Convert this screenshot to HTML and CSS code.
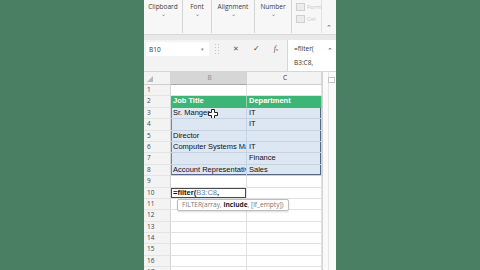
FILE: index.html
```html
<!DOCTYPE html>
<html lang="en">
<head>
  <meta charset="UTF-8">
  <title>Excel FILTER</title>
  <link rel="stylesheet" href="styles.css">
</head>
<body>

<div class="app">

  <div class="ribbon">
    <div class="group w-clip"><span class="glabel">Clipboard</span><span class="gcaret">&#8964;</span></div>
    <div class="group w-font"><span class="glabel">Font</span><span class="gcaret">&#8964;</span></div>
    <div class="group w-align"><span class="glabel">Alignment</span><span class="gcaret">&#8964;</span></div>
    <div class="group w-num"><span class="glabel">Number</span><span class="gcaret">&#8964;</span></div>
    <div class="group w-cells">
      <div class="ghost"><span class="gicon"></span>Form</div>
      <div class="ghost"><span class="gicon"></span>Cel</div>
    </div>
    <div class="group w-end"><span class="collapse">&#8963;</span></div>
  </div>
  <div class="band"></div>

  <div class="fbar">
    <div class="fleft">
      <div class="namebox"><span>B10</span><span class="nb-arrow">&#9662;</span></div>
      <div class="grip"></div>
      <div class="fbtn">&#10005;</div>
      <div class="fbtn check">&#10003;</div>
      <div class="fbtn fx"><i>f</i><small>x</small></div>
    </div>
    <div class="finput">
      <div>=filter(</div>
      <div>B3:C8,</div>
      <span class="fcaret">&#8963;</span>
    </div>
  </div>

  <div class="sheet">
    <div class="grid">
      <div class="row head">
        <div class="rh corner"><span class="tri"></span></div>
        <div class="cell ch sel">B</div>
        <div class="cell ch">C</div>
      </div>
      <div class="row"><div class="rh">1</div><div class="cell"></div><div class="cell"></div></div>
      <div class="row"><div class="rh">2</div><div class="cell th">Job Title</div><div class="cell th">Department</div></div>
      <div class="row"><div class="rh">3</div><div class="cell tb rl">Sr. Manger
        <svg class="cursor" width="10" height="10" viewBox="0 0 10 10"><path d="M3.5 0.5h3v3h3v3h-3v3h-3v-3h-3v-3h3z" fill="#fff" stroke="#222" stroke-width="1"/></svg>
      </div><div class="cell tb rr">IT</div></div>
      <div class="row"><div class="rh">4</div><div class="cell tb rl"></div><div class="cell tb rr">IT</div></div>
      <div class="row"><div class="rh">5</div><div class="cell tb rl">Director</div><div class="cell tb rr"></div></div>
      <div class="row"><div class="rh">6</div><div class="cell tb rl">Computer Systems Manager</div><div class="cell tb rr">IT</div></div>
      <div class="row"><div class="rh">7</div><div class="cell tb rl"></div><div class="cell tb rr">Finance</div></div>
      <div class="row"><div class="rh">8</div><div class="cell tb rl rb">Account Representative</div><div class="cell tb rr rb">Sales</div></div>
      <div class="row"><div class="rh">9</div><div class="cell"></div><div class="cell"></div></div>
      <div class="row"><div class="rh">10</div><div class="cell active"><b>=filter(</b><span class="ref">B3:C8</span><b>,</b></div><div class="cell"></div></div>
      <div class="row"><div class="rh">11</div><div class="cell"></div><div class="cell"></div>
        <div class="tip">FILTER(array, <b>include</b>, [if_empty])</div>
      </div>
      <div class="row"><div class="rh">12</div><div class="cell"></div><div class="cell"></div></div>
      <div class="row"><div class="rh">13</div><div class="cell"></div><div class="cell"></div></div>
      <div class="row"><div class="rh">14</div><div class="cell"></div><div class="cell"></div></div>
      <div class="row"><div class="rh">15</div><div class="cell"></div><div class="cell"></div></div>
      <div class="row"><div class="rh">16</div><div class="cell"></div><div class="cell"></div></div>
      <div class="row"><div class="rh">17</div><div class="cell"></div><div class="cell"></div></div>
    </div>
    <div class="vscroll"><span class="up"></span></div>
  </div>

</div>

</body>
</html>
```

FILE: styles.css
```css
body {
  margin: 0;
  background-color: #4a7f63;
  font-family: "Liberation Sans", Arial, sans-serif;
}
.app {
  width: 192px;
  height: 270px;
  margin-left: 144px;
  background-color: #fff;
  overflow: hidden;
}

/* ribbon */
.ribbon {
  display: flex;
  height: 35px;
  background-color: #f7f7f7;
  border-bottom: 1px solid #d9d9d9;
  box-sizing: border-box;
}
.group {
  display: flex;
  flex-direction: column;
  align-items: center;
  height: 33px;
  border-right: 1px solid #d4d4d4;
  box-sizing: border-box;
  font-family: "Open Sans", sans-serif;
  font-size: 6.5px;
  color: #3a3a3a;
}
.w-clip { width: 39px; }
.w-font { width: 29px; }
.w-align { width: 43px; }
.w-num { width: 37px; }
.w-cells { width: 30px; align-items: flex-start; padding-left: 4px; border-right: 1px solid #e2e2e2; }
.w-end { width: 14px; border-right: none; justify-content: flex-end; }
.glabel {
  margin-top: 2px;
  line-height: 10px;
}
.gcaret {
  font-size: 6px;
  line-height: 5px;
  color: #777;
}
.ghost {
  display: flex;
  align-items: center;
  gap: 2px;
  height: 11px;
  margin-top: 1px;
  color: #c6c6c6;
  font-size: 6px;
}
.gicon {
  width: 7px;
  height: 6px;
  border: 1px solid #cfcfcf;
  background-color: #ececec;
}
.collapse {
  font-size: 7px;
  line-height: 7px;
  color: #555;
  padding-bottom: 2px;
}
.band {
  height: 5px;
  background-color: #e9e9e9;
}

/* formula bar */
.fbar {
  display: flex;
  height: 31px;
  background-color: #f3f3f3;
  border-bottom: 1px solid #d6d6d6;
}
.fleft {
  display: flex;
  align-items: flex-start;
  width: 143px;
  padding-top: 2px;
  box-sizing: border-box;
}
.namebox {
  display: flex;
  justify-content: space-between;
  align-items: center;
  width: 63px;
  height: 14px;
  margin-left: 2px;
  padding: 0 5px 0 3px;
  box-sizing: border-box;
  background-color: #fff;
  font-family: "Open Sans", sans-serif;
  font-size: 6.5px;
  color: #333;
}
.nb-arrow {
  font-size: 5px;
  color: #888;
}
.grip {
  width: 6px;
  height: 12px;
  margin: 1px 6px 0 5px;
  background-image: radial-gradient(circle, #c7c7c7 0.6px, transparent 0.8px);
  background-size: 3px 3px;
}
.fbtn {
  width: 20px;
  height: 14px;
  line-height: 14px;
  text-align: center;
  font-size: 7px;
  color: #555;
}
.fbtn.check { color: #444; font-size: 8px; }
.fbtn.fx { font-family: "Liberation Serif", serif; font-size: 8px; }
.fbtn.fx small { font-size: 5px; }
.finput {
  position: relative;
  flex: 1;
  padding: 2px 0 0 6px;
  background-color: #fff;
  border-left: 1px solid #d6d6d6;
  font-family: "Open Sans", sans-serif;
  font-size: 6.5px;
  line-height: 14px;
  color: #333;
}
.fcaret {
  position: absolute;
  right: 3px;
  top: 4px;
  font-size: 7px;
  color: #444;
}

/* sheet */
.sheet {
  display: flex;
}
.grid {
  width: 178px;
}
.row {
  position: relative;
  display: flex;
  height: 11.4px;
}
.row.head {
  height: 13px;
  background-color: #f3f3f3;
}
.rh {
  width: 27px;
  padding-left: 3px;
  box-sizing: border-box;
  border-right: 1px solid #d4d4d4;
  border-bottom: 1px solid #e4e4e4;
  background-color: #f3f3f3;
  font-family: "Open Sans", sans-serif;
  font-size: 6.5px;
  line-height: 10.4px;
  color: #444;
}
.corner {
  display: flex;
  align-items: flex-end;
  padding: 0 0 2px 3px;
  border-bottom: 1px solid #cfcfcf;
}
.tri {
  width: 0;
  height: 0;
  border-left: 6px solid transparent;
  border-bottom: 6px solid #b9b9b9;
}
.cell {
  position: relative;
  width: 76px;
  padding-left: 2px;
  box-sizing: border-box;
  border-right: 1px solid #e1e1e1;
  border-bottom: 1px solid #e1e1e1;
  overflow: hidden;
  white-space: nowrap;
  font-size: 7.5px;
  line-height: 10.4px;
  color: #111;
}
.cell + .cell { width: 75px; }
.ch {
  text-align: center;
  font-family: "Open Sans", sans-serif;
  font-size: 6.5px;
  line-height: 12px;
  color: #333;
  border-right: 1px solid #d4d4d4;
  border-bottom: 1px solid #cfcfcf;
}
.ch.sel {
  background-color: #d6d6d6;
  color: #8a8a8a;
  border-bottom: 1px solid #a9a9a9;
}
.th {
  background-color: #3cb577;
  color: #fff;
  font-weight: bold;
  border-right: 1px solid #8fd6b0;
  border-bottom: 1px solid #3cb577;
}
.tb {
  background-color: #dde7f3;
  border-right: 1px solid #c5d2e4;
  border-bottom: 1px solid #c5d2e4;
}
.rl { box-shadow: inset 1px 0 #6f87a8; }
.rr { box-shadow: inset -1px 0 #55698a; }
.rl.rb { box-shadow: inset 1px 0 #6f87a8, inset 0 -1px #55698a; }
.rr.rb { box-shadow: inset -1px 0 #55698a, inset 0 -1px #55698a; }
.cursor {
  position: absolute;
  left: 37px;
  top: 1px;
}
.active {
  box-shadow: inset 0 0 0 1px #4a4a4a;
  overflow: visible;
}
.active b { font-weight: bold; }
.ref { color: #5b7fb5; }
.tip {
  position: absolute;
  left: 33px;
  top: 0;
  height: 12px;
  padding: 0 4px;
  box-sizing: border-box;
  background-color: #fff;
  border: 1px solid #bdbdbd;
  border-radius: 2px;
  box-shadow: 0 1px 2px rgba(0,0,0,0.15);
  font-family: "Open Sans", sans-serif;
  font-size: 6.6px;
  line-height: 10px;
  color: #777;
  white-space: nowrap;
  z-index: 2;
}
.tip b { color: #222; }
.vscroll {
  position: relative;
  width: 14px;
  border-left: 1px solid #d4d4d4;
  box-sizing: border-box;
  background-color: #fafafa;
  background-image: linear-gradient(to right, transparent 5px, #e6e6e6 5px, #e6e6e6 6px, transparent 6px);
}
.up {
  position: absolute;
  right: 1px;
  top: 5px;
  width: 5px;
  height: 4px;
  border: 1px solid #c8c8c8;
  background-color: #fff;
}
```
